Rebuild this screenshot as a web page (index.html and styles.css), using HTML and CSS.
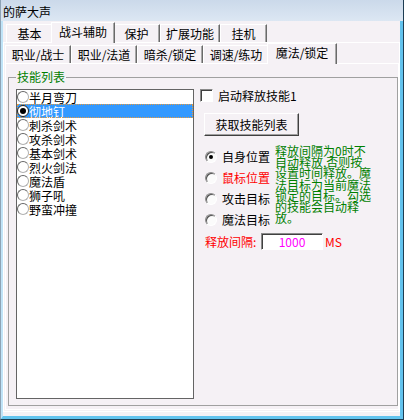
FILE: index.html
```html
<!DOCTYPE HTML>
<html lang="zh-CN">
<head>
    <meta charset="UTF-8">
    <title>的萨大声</title>
    <link rel="stylesheet" href="styles.css">
</head>
<body>
<div class="window">
    <div class="titlebar">的萨大声</div>
    <div class="frame">

        <!-- 一级标签 -->
        <div class="tabs">
            <div class="tab">基本</div>
            <div class="tab active">战斗辅助</div>
            <div class="tab">保护</div>
            <div class="tab">扩展功能</div>
            <div class="tab">挂机</div>
        </div>
        <div class="page">

            <!-- 二级标签 -->
            <div class="tabs sub">
                <div class="tab">职业/战士</div>
                <div class="tab">职业/法道</div>
                <div class="tab">暗杀/锁定</div>
                <div class="tab">调速/练功</div>
                <div class="tab active">魔法/锁定</div>
            </div>
            <div class="page inner">
                <fieldset class="group">
                    <legend>技能列表</legend>
                    <div class="group-body">
                        <div class="listbox">
                            <div class="item"><span class="dot"></span>半月弯刀</div>
                            <div class="item selected"><span class="dot"></span>彻地钉</div>
                            <div class="item"><span class="dot"></span>刺杀剑术</div>
                            <div class="item"><span class="dot"></span>攻杀剑术</div>
                            <div class="item"><span class="dot"></span>基本剑术</div>
                            <div class="item"><span class="dot"></span>烈火剑法</div>
                            <div class="item"><span class="dot"></span>魔法盾</div>
                            <div class="item"><span class="dot"></span>狮子吼</div>
                            <div class="item"><span class="dot"></span>野蛮冲撞</div>
                        </div>

                        <div class="controls">
                            <div class="check-row"><span class="checkbox"></span><span class="check-label">启动释放技能1</span></div>
                            <div class="button">获取技能列表</div>
                            <div class="target-row">
                                <div class="targets">
                                    <div class="radio-row"><span class="radio checked"></span>自身位置</div>
                                    <div class="radio-row red"><span class="radio"></span>鼠标位置</div>
                                    <div class="radio-row"><span class="radio"></span>攻击目标</div>
                                    <div class="radio-row"><span class="radio"></span>魔法目标</div>
                                </div>
                                <div class="note">释放间隔为0时不自动释放,否则按设置时间释放。魔法目标为当前魔法锁定的目标。勾选的技能会自动释放。</div>
                            </div>
                            <div class="interval-row">
                                <span class="interval-label">释放间隔:</span>
                                <span class="input">1000</span>
                                <span class="unit">MS</span>
                            </div>
                        </div>
                    </div>
                </fieldset>
            </div>
        </div>
    </div>
</div>
</body>
</html>
```

FILE: styles.css
```css
body {
    margin: 0;
    font-family: "Noto Sans CJK SC", sans-serif;
    font-size: 12px;
    color: #000;
}
.window {
    width: 404px;
    height: 420px;
    box-sizing: border-box;
    display: flex;
    flex-direction: column;
    border-left: 1px solid #8ea3b5;
    border-right: 1px solid #1e3d52;
    border-bottom: 1px solid #1e3d52;
    background: #f5f1f5;
}
.titlebar {
    height: 21px;
    box-sizing: border-box;
    padding: 2px 0 0 2px;
    line-height: 19px;
    background: linear-gradient(#cbd9ea, #dce7f3);
}
.frame {
    flex: 1;
    border-style: solid;
    border-color: #bfe3f7 #62c3ee #62c3ee #bfe3f7;
    border-width: 0 3px 3px 2px;
}

/* 标签 */
.tabs {
    display: flex;
    align-items: flex-end;
    height: 21px;
    padding-left: 3px;
}
.tabs.sub {
    height: 20px;
    padding-left: 0;
}
.tab {
    height: 18px;
    min-width: 47px;
    box-sizing: border-box;
    padding: 0 5px;
    line-height: 17px;
    text-align: center;
    white-space: nowrap;
    border-top: 1px solid #fff;
    border-left: 1px solid #fff;
    border-right: 1px solid #6a6a6a;
    box-shadow: inset -1px 0 0 #a8a8a8;
    background: #f5f1f5;
}
.sub .tab {
    min-width: 66px;
}
.tab.active {
    position: relative;
    z-index: 1;
    height: 21px;
    min-width: 51px;
    padding: 0 7px;
    margin: 0 -2px -1px -2px;
}
.sub .tab.active {
    min-width: 70px;
}
.page {
    border: 1px solid #fff;
    padding: 0 0 1px 1px;
}
.page.inner {
    padding: 6px 0 3px 2px;
}

/* 分组 */
.group {
    margin: 0;
    padding: 5px 3px 6px 7px;
    border: 1px solid #a0a0a0;
}
.group legend {
    padding: 0 1px;
    line-height: 14px;
    color: #008000;
}
.group-body {
    display: flex;
}
.listbox {
    width: 178px;
    height: 310px;
    box-sizing: border-box;
    border: 1px solid #646464;
    background: #fff;
}
.item {
    display: flex;
    align-items: center;
    height: 14px;
    line-height: 13px;
    white-space: nowrap;
}
.item.selected {
    background: #3399ff;
    color: #fff;
    outline: 1px dotted #e89a3c;
    outline-offset: -1px;
}
.dot {
    width: 12px;
    height: 12px;
    box-sizing: border-box;
    border: 1px solid;
    border-color: #666 #b0b0b0 #b0b0b0 #666;
    border-radius: 50%;
    background: #fff;
    position: relative;
}
.selected .dot {
    border-color: #222;
}
.selected .dot::after {
    content: "";
    position: absolute;
    left: 2px;
    top: 2px;
    width: 6px;
    height: 6px;
    border-radius: 50%;
    background: #000;
}

/* 右侧控件 */
.controls {
    margin-left: 6px;
}
.check-row {
    display: flex;
    align-items: center;
    height: 13px;
}
.checkbox {
    width: 13px;
    height: 13px;
    box-sizing: border-box;
    border: 1px solid;
    border-color: #8a8a8a #fff #fff #8a8a8a;
    box-shadow: inset 1px 1px 0 #404040;
    background: #fff;
}
.check-label {
    margin-left: 5px;
    line-height: 13px;
}
.button {
    width: 95px;
    height: 23px;
    box-sizing: border-box;
    margin: 11px 0 0 4px;
    line-height: 21px;
    text-align: center;
    border: 1px solid;
    border-color: #fff #404040 #404040 #fff;
    box-shadow: inset -1px -1px 0 #a0a0a0;
    background: #f5f1f5;
}
.target-row {
    display: flex;
    margin-top: 10px;
}
.targets {
    margin-left: 5px;
}
.radio-row {
    display: flex;
    align-items: center;
    height: 21px;
    white-space: nowrap;
}
.red {
    color: #ff0000;
}
.radio {
    position: relative;
    width: 12px;
    height: 12px;
    box-sizing: border-box;
    margin-right: 5px;
    border: 1px solid;
    border-color: #8a8a8a #fff #fff #8a8a8a;
    border-radius: 50%;
    box-shadow: inset 1px 1px 0 #505050;
    background: #fbfbfb;
}
.radio.checked::after {
    content: "";
    position: absolute;
    left: 3px;
    top: 3px;
    width: 4px;
    height: 4px;
    border-radius: 50%;
    background: #000;
}
.note {
    width: 97px;
    margin: -1px 0 0 5px;
    line-height: 11.2px;
    color: #008000;
}
.interval-row {
    display: flex;
    align-items: center;
    margin: 3px 0 0 5px;
    color: #ff0000;
}
.interval-label {
    width: 56px;
}
.input {
    width: 62px;
    height: 17px;
    box-sizing: border-box;
    line-height: 15px;
    text-align: center;
    color: #ff00ff;
    border: 1px solid;
    border-color: #8a8a8a #fff #fff #8a8a8a;
    box-shadow: inset 1px 1px 0 #404040;
    background: #fff;
}
.unit {
    margin-left: 2px;
}
```
